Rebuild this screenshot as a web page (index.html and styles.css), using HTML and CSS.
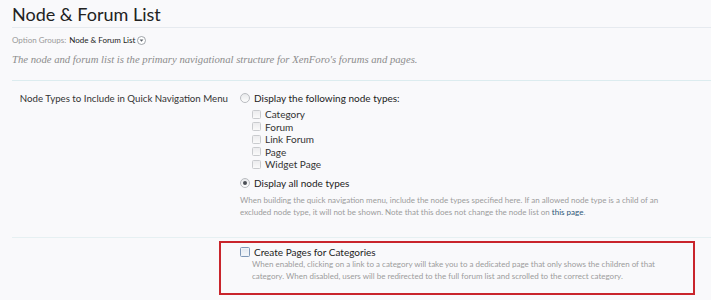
FILE: index.html
```html
<!DOCTYPE html>
<html>
<head>
<meta charset="utf-8">
<link rel="stylesheet" href="styles.css">
</head>
<body>
<div class="page">
  <h1 class="title">Node &amp; Forum List</h1>
  <div class="crumbs"><span class="crumb-label">Option Groups:</span> <span class="crumb-link">Node &amp; Forum List</span><span class="crumb-menu"><svg width="9" height="9" viewBox="0 0 9 9"><circle cx="4.5" cy="4.5" r="4" fill="#fff" stroke="#8a8f96" stroke-width="0.8"/><path d="M2.6 3.6 L6.4 3.6 L4.5 5.8 Z" fill="#5a6068"/></svg></span></div>
  <p class="intro">The node and forum list is the primary navigational structure for XenForo's forums and pages.</p>

  <div class="option">
    <div class="opt-label">Node Types to Include in Quick Navigation Menu</div>
    <div class="opt-controls">
      <div class="choice"><span class="radio"></span>Display the following node types:</div>
      <ul class="types">
        <li><span class="check"></span>Category</li>
        <li><span class="check"></span>Forum</li>
        <li><span class="check"></span>Link Forum</li>
        <li><span class="check"></span>Page</li>
        <li><span class="check"></span>Widget Page</li>
      </ul>
      <div class="choice choice-all"><span class="radio on"></span>Display all node types</div>
      <p class="hint">When building the quick navigation menu, include the node types specified here. If an allowed node type is a child of an excluded node type, it will not be shown. Note that this does not change the node list on <span class="hint-link">this page</span>.</p>
    </div>
  </div>

  <div class="option-box">
    <div class="choice"><span class="check check-blue"></span>Create Pages for Categories</div>
    <p class="hint hint-box">When enabled, clicking on a link to a category will take you to a dedicated page that only shows the children of that category. When disabled, users will be redirected to the full forum list and scrolled to the correct category.</p>
  </div>
</div>
</body>
</html>
```
FILE: styles.css
```css
html, body {
  margin: 0;
  padding: 0;
  background: #f9f9fb;
}
body {
  font-family: Lato, "Liberation Sans", sans-serif;
  color: #333;
  overflow: hidden;
}
.page {
  padding-left: 12px;
}
.title {
  margin: 0;
  padding-top: 1px;
  height: 26px;
  font-weight: normal;
  font-size: 18px;
  line-height: 26px;
  color: #222;
  border-bottom: 1px solid #e6eaef;
}
.crumbs {
  margin-top: 6px;
  height: 13px;
  font-size: 8px;
  line-height: 13px;
  display: flex;
  align-items: center;
}
.crumb-label { color: #9a9a9a; margin-right: 3px; }
.crumb-link { color: #222; }
.crumb-menu { display: inline-flex; margin-left: 2px; }
.intro {
  margin: 4px 0 0;
  height: 16px;
  font-family: "Liberation Serif", serif;
  font-style: italic;
  font-size: 10.7px;
  line-height: 16px;
  color: #8c8c8c;
}
.option {
  margin-top: 13px;
  border-top: 1px solid #dcecef;
  display: grid;
  grid-template-columns: 216px 1fr;
  column-gap: 12px;
  padding: 10px 0 18px;
  border-bottom: 1px solid #e6f0f2;
}
.opt-label {
  text-align: right;
  font-size: 9.7px;
  line-height: 14px;
  color: #333;
  white-space: nowrap;
}
.choice {
  display: flex;
  align-items: center;
  font-size: 10px;
  line-height: 14px;
  color: #222;
}
.radio {
  width: 8px;
  height: 8px;
  border-radius: 50%;
  border: 1px solid #b9bcc0;
  background: linear-gradient(#e8e9eb, #fdfdfd);
  margin-right: 4px;
  box-sizing: content-box;
  position: relative;
  flex: none;
}
.radio.on::after {
  content: "";
  position: absolute;
  left: 2px; top: 2px;
  width: 4px; height: 4px;
  border-radius: 50%;
  background: #4b4f55;
}
.types {
  list-style: none;
  margin: 3px 0 5px 12px;
  padding: 0;
}
.types li {
  display: flex;
  align-items: center;
  font-size: 10px;
  line-height: 12.5px;
  color: #333;
}
.check {
  width: 7px;
  height: 7px;
  border: 1px solid #c9cbce;
  border-radius: 1.5px;
  background: linear-gradient(#ececee, #fafafa);
  margin-right: 4px;
  flex: none;
}
.check-blue {
  width: 8px;
  height: 8px;
  border-color: #7f98b8;
  background: linear-gradient(#dfe6ef, #f6f8fb);
  box-shadow: inset 0 0 0 1px #eef2f7;
}
.choice-all { margin-top: 2px; }
.hint {
  margin: 4px 0 0;
  font-size: 8px;
  line-height: 12.5px;
  color: #9c9c9c;
  max-width: 440px;
}
.hint-link { color: #2c5677; }
.option-box {
  margin: 3px 16px 6px 207px;
  height: 48px;
  border: 2px solid #c9252c;
  padding: 2px 10px 0 19px;
}
.hint-box {
  margin: -1px 0 0 12px;
  max-width: 432px;
}
```
